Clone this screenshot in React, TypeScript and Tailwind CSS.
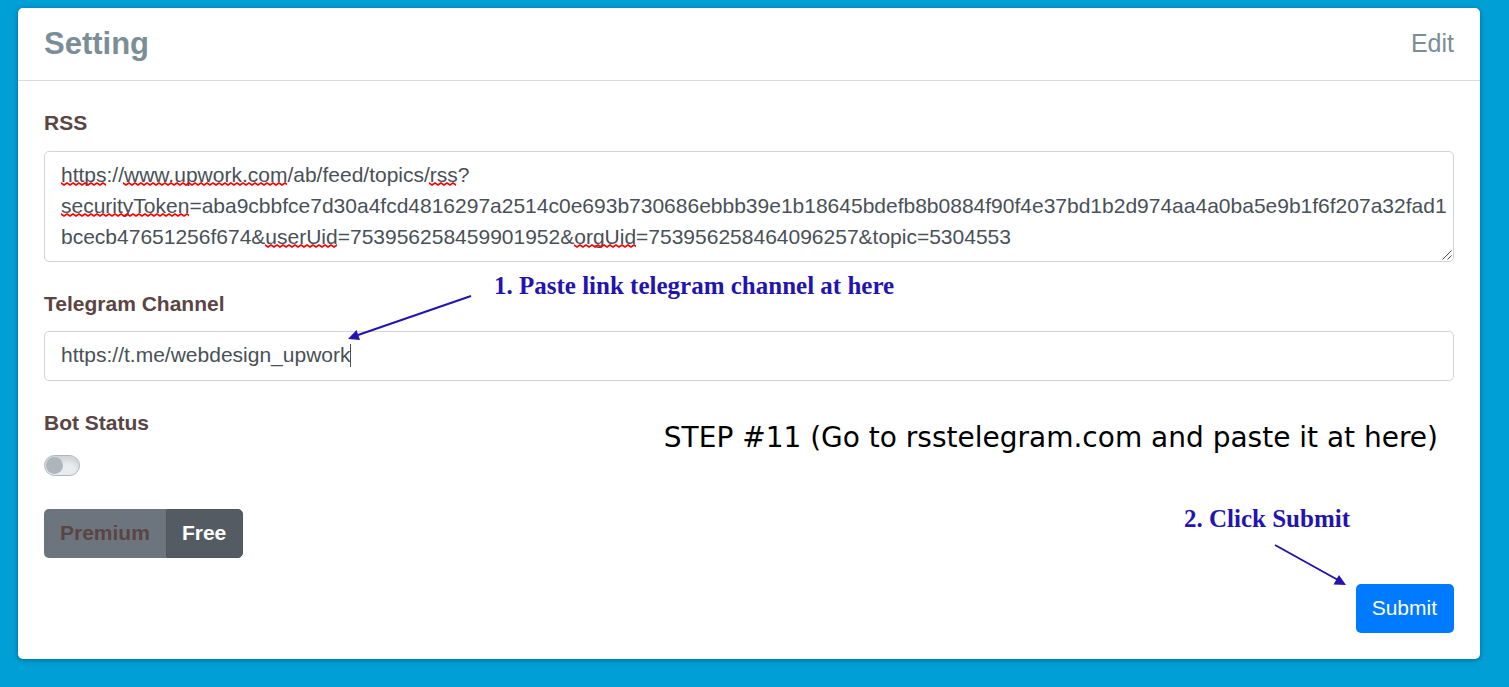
import { useState } from "react";

const feedUrl =
  "https://www.upwork.com/ab/feed/topics/rss?\nsecurityToken=aba9cbbfce7d30a4fcd4816297a2514c0e693b730686ebbb39e1b18645bdefb8b0884f90f4e37bd1b2d974aa4a0ba5e9b1f6f207a32fad1\nbcecb47651256f674&userUid=753956258459901952&orgUid=753956258464096257&topic=5304553";

// Spell-check marks: start, width and top inside the feed box.
const marks = [
  { x: 17, y: 31, w: 45 },
  { x: 79, y: 31, w: 164 },
  { x: 385, y: 31, w: 27 },
  { x: 17, y: 62, w: 128 },
  { x: 221, y: 93, w: 72 },
  { x: 530, y: 93, w: 62 },
];

function Squiggles() {
  return (
    <svg className="pointer-events-none absolute top-0 left-0" width="600" height="110" aria-hidden="true">
      <defs>
        <pattern id="wave" width="6" height="4" patternUnits="userSpaceOnUse">
          <path d="M-3 3 L0 1 L3 3 L6 1 L9 3" fill="none" stroke="#f00" strokeWidth="1.6" />
        </pattern>
      </defs>
      {marks.map((m) => (
        <g key={`${m.x}-${m.y}`} transform={`translate(${m.x} ${m.y})`}>
          <rect width={m.w} height="4" fill="url(#wave)" />
        </g>
      ))}
    </svg>
  );
}

export default function App() {
  const [feed, setFeed] = useState(feedUrl);
  const [channel, setChannel] = useState("https://t.me/webdesign_upwork");
  const [active, setActive] = useState(false);

  return (
    <main className="min-h-screen bg-[#009fd6] pt-2 pr-[29px] pb-7 pl-[18px] font-['Liberation_Sans',Arial,sans-serif] text-[21px] leading-[31px] text-[#5b4444]">
      <section className="rounded-[5px] bg-white shadow-[0_1px_5px_rgba(0,0,0,0.35)]">
        <header className="flex items-center justify-between border-b border-[#dcdcdc] px-[26px] pt-4 pb-[17px] text-[#7b8e96]">
          <h1 className="text-[31px] leading-[39px] font-bold">Setting</h1>
          <a href="#edit" className="text-[25px] leading-[39px]">
            Edit
          </a>
        </header>

        <form className="flex flex-col p-[26px]" onSubmit={(e) => e.preventDefault()}>
          <label htmlFor="rss" className="mb-[13px] font-bold">
            RSS
          </label>
          <div className="relative mb-[26px]">
            <textarea
              id="rss"
              rows={3}
              spellCheck={false}
              value={feed}
              onChange={(e) => setFeed(e.target.value)}
              className="block w-full resize-none overflow-hidden rounded-[5px] border border-[#ced4da] bg-white pt-[7px] pr-1 pb-[9px] pl-4 text-[#495057] outline-none"
            />
            <Squiggles />
            <svg className="pointer-events-none absolute right-0.5 bottom-0.5" width="10" height="10" aria-hidden="true">
              <path d="M.5 9.500 L9.500 .5 M5.500 9.500 L9.500 5.500" stroke="#444" strokeWidth="1" />
            </svg>
          </div>

          <div className="relative mb-[26px]">
            <label htmlFor="channel" className="mb-3 block font-bold">
              Telegram Channel
            </label>
            <div className="relative">
              <input
                id="channel"
                type="text"
                spellCheck={false}
                value={channel}
                onChange={(e) => setChannel(e.target.value)}
                className="block h-[50px] w-full rounded-[5px] border border-[#ced4da] bg-white px-4 pb-0.5 text-[#495057] outline-none"
              />
              <span className="absolute top-[13px] left-[306px] h-[23px] w-px bg-[#495057]" />
            </div>
            <p className="absolute -top-4 left-[450px] font-['Liberation_Serif',serif] text-[25px] leading-7 font-bold whitespace-nowrap text-[#2314b0]">
              1. Paste link telegram channel at here
            </p>
            <svg className="pointer-events-none absolute top-0 left-[300px]" width="132" height="60" aria-hidden="true">
              <path d="M127 8 L14 47" stroke="#2314b0" strokeWidth="2" />
              <path d="M4 51 L12.500 42 L16 52 Z" fill="#2314b0" />
            </svg>
          </div>

          <div className="relative mb-[33px]">
            <label htmlFor="bot" className="mb-[17px] block font-bold">
              Bot Status
            </label>
            <input
              id="bot"
              type="checkbox"
              role="switch"
              checked={active}
              onChange={(e) => setActive(e.target.checked)}
              className="block h-[21px] w-9 appearance-none rounded-full border border-[#adb5bd] bg-[#e9ecef] p-px shadow-[inset_0_5px_5px_rgba(0,0,0,0.1)] before:block before:size-[17px] before:rounded-full before:bg-[#adb5bd] checked:before:ml-[15px]"
            />
            <p className="absolute top-[13px] right-4 font-['DejaVu_Sans',sans-serif] text-[28px] leading-9 whitespace-nowrap text-black">
              STEP #11 (Go to rsstelegram.com and paste it at here)
            </p>
          </div>

          <div className="mb-[26px] flex">
            <button type="button" className="rounded-l-[5px] bg-[#6c757d] px-4 pt-2 pb-[10px] font-bold">
              Premium
            </button>
            <button
              type="button"
              className="rounded-r-[5px] border border-[#4e555b] bg-[#545b62] pt-[7px] pr-4 pb-[9px] pl-[15px] font-bold text-white"
            >
              Free
            </button>
          </div>

          <div className="relative flex justify-end">
            <p className="absolute top-[-79px] right-[104px] font-['Liberation_Serif',serif] text-[25px] leading-7 font-bold whitespace-nowrap text-[#2314b0]">
              2. Click Submit
            </p>
            <svg className="pointer-events-none absolute -top-10 right-[106px]" width="76" height="44" aria-hidden="true">
              <path d="M3 1 L66 36" stroke="#2314b0" strokeWidth="2" />
              <path d="M74 41 L61.500 40.500 L67 31 Z" fill="#2314b0" />
            </svg>
            <button type="submit" className="rounded-[5px] bg-[#007bff] pt-2 pr-[17px] pb-[10px] pl-4 text-white">
              Submit
            </button>
          </div>
        </form>
      </section>
    </main>
  );
}
